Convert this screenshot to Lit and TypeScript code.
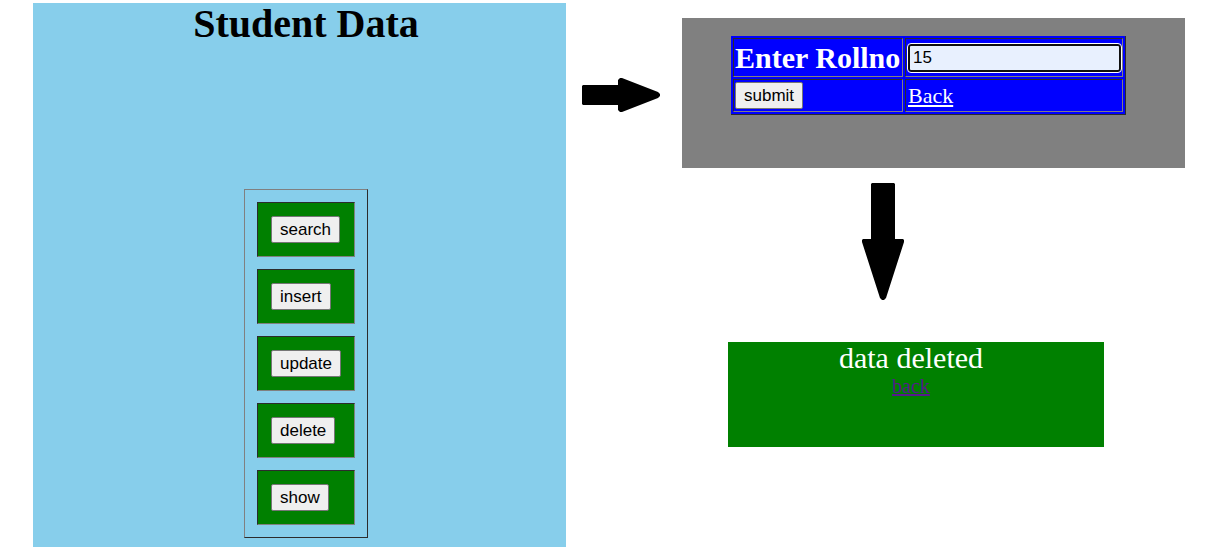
import { LitElement, html, css } from "lit";
import { customElement, state } from "lit/decorators.js";

const ACTIONS = ["search", "insert", "update", "delete", "show"];

@customElement("app-root")
export class AppRoot extends LitElement {
  @state() private rollNo = "15";

  static styles = css`
    :host {
      display: block;
      font-family: "Liberation Serif", "Times New Roman", serif;
      background: #fff;
    }
    .page {
      box-sizing: border-box;
      min-height: 100vh;
      padding: 3px 26px 0 33px;
      display: grid;
      grid-template-columns: 533fr 116fr 503fr;
    }
    .home {
      background: skyblue;
      padding: 0 0 9px 13px;
      display: flex;
      flex-direction: column;
      align-items: center;
      justify-content: space-between;
    }
    h1 {
      margin: 0;
      font-size: 40px;
      line-height: 42px;
    }
    table {
      border-collapse: separate;
    }
    td,
    th {
      border: 1px solid;
      border-color: #2c2c2c #808080 #808080 #2c2c2c;
    }
    .menu {
      border: 1px solid;
      border-color: #808080 #2c2c2c #2c2c2c #808080;
      border-spacing: 12px;
    }
    .menu td {
      background: green;
      padding: 13px;
      line-height: 0;
    }
    button {
      box-sizing: border-box;
      height: 27px;
      padding: 0 8px;
      border: 1px solid #767676;
      border-radius: 2px;
      background: #efefef;
      color: #000;
      font: 17px/20px "Liberation Sans", Arial, sans-serif;
    }
    .next {
      padding: 75px 0 0 16px;
    }
    svg {
      display: block;
    }
    .steps {
      padding-top: 15px;
    }
    .query {
      background: gray;
      min-height: 150px;
      box-sizing: border-box;
      padding: 18px 59px 0 49px;
    }
    .form {
      width: 100%;
      background: blue;
      color: #fff;
      border: solid #2c2c2c;
      border-width: 0 1px 1px 0;
      border-spacing: 2px;
    }
    .form td,
    .form th {
      padding: 1px;
      text-align: left;
    }
    .form th {
      width: 166px;
      height: 35px;
      font-size: 30px;
      line-height: 35px;
      white-space: nowrap;
    }
    .form .low td {
      height: 29px;
      line-height: 0;
    }
    .form a {
      color: #fff;
      font-size: 22px;
      line-height: 26px;
      padding-left: 1px;
    }
    input {
      box-sizing: border-box;
      display: block;
      width: calc(100% - 1px);
      height: 28px;
      margin: 0 0 0 1px;
      padding: 0 3px;
      border: 2px solid #101010;
      border-radius: 3px;
      outline: 1px solid #fff;
      background: #e8f0fe;
      color: #000;
      font: 17px/20px "Liberation Sans", Arial, sans-serif;
    }
    .down {
      padding: 15px 0 0 180px;
    }
    .result {
      margin: 42px 81px 0 46px;
      padding-right: 10px;
      min-height: 105px;
      box-sizing: border-box;
      background: green;
      color: #fff;
      text-align: center;
      font-size: 30px;
      line-height: 32px;
    }
    .result p {
      margin: 0;
    }
    .result a {
      display: block;
      color: #551a8b;
      font-size: 20px;
      line-height: 24px;
    }
  `;

  render() {
    return html`
      <main class="page">
        <section class="home">
          <h1>Student Data</h1>
          <table class="menu">
            <tbody>
              ${ACTIONS.map(
                (name) => html`<tr><td><button type="button">${name}</button></td></tr>`
              )}
            </tbody>
          </table>
        </section>
        <div class="next">
          <svg width="78" height="34" viewBox="0 0 78 34" aria-hidden="true">
            <path d="M1 7H36V2L38 0H40L76 14L78 16V18L76 20L40 34H38L36 32V27H1L0 26V8Z" />
          </svg>
        </div>
        <div class="steps">
          <form class="query" @submit=${(e: Event) => e.preventDefault()}>
            <table class="form">
              <tbody>
                <tr>
                  <th><label for="rollno">Enter Rollno</label></th>
                  <td>
                    <input
                      id="rollno"
                      type="text"
                      .value=${this.rollNo}
                      @input=${(e: Event) => (this.rollNo = (e.target as HTMLInputElement).value)}
                    />
                  </td>
                </tr>
                <tr class="low">
                  <td><button type="submit">submit</button></td>
                  <td><a href="#home">Back</a></td>
                </tr>
              </tbody>
            </table>
          </form>
          <div class="down">
            <svg width="42" height="117" viewBox="0 0 42 117" aria-hidden="true">
              <path d="M10 0H32L33 1V56H41L42 57V59L24 115L22 117H20L18 115L0 59V57L1 56H9V1Z" />
            </svg>
          </div>
          <section class="result">
            <p>data deleted</p>
            <a href="#home">back</a>
          </section>
        </div>
      </main>
    `;
  }
}
